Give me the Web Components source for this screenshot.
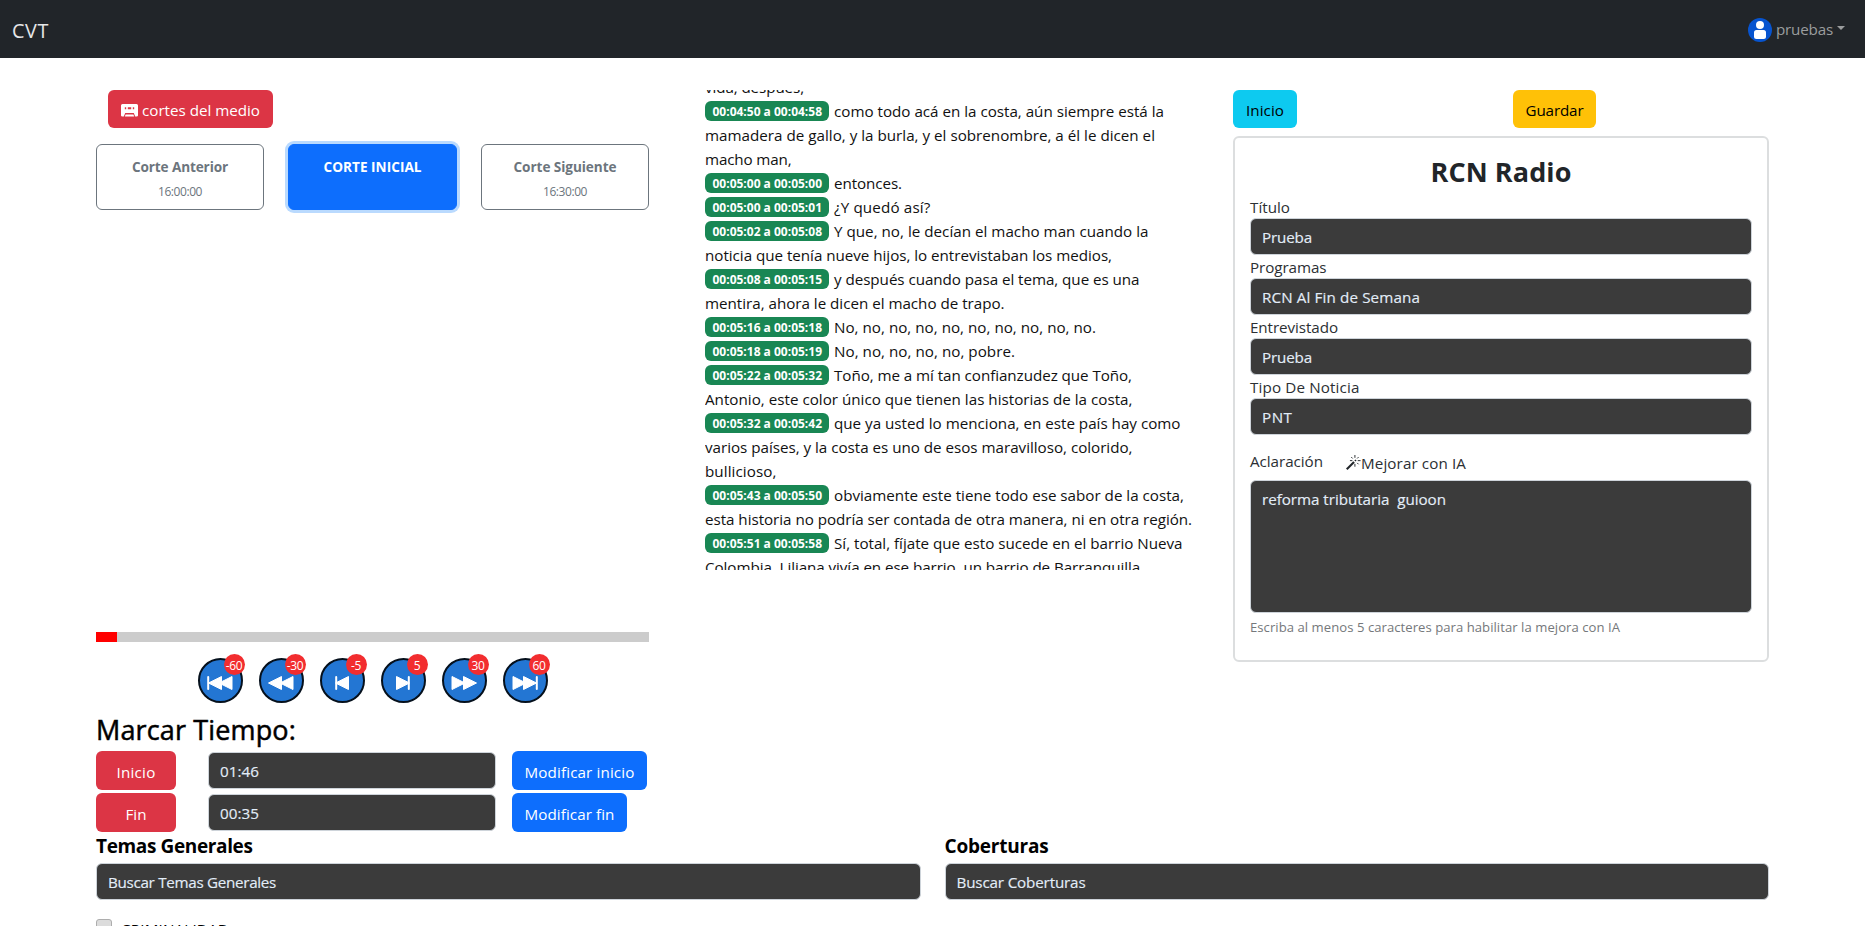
<!DOCTYPE html>
<html lang="es">
<head>
<meta charset="utf-8">
<title>CVT</title>
<style>
html,body{margin:0;height:926px;overflow:hidden;background:#fff}
body{font:15.2px/24px "Open Sans","Noto Sans",sans-serif;color:#000}
</style>
</head>
<body>
<cvt-app></cvt-app>
<script>
const define=(name,html,after)=>{
  const t=document.createElement('template');t.innerHTML=html;
  customElements.define(name,class extends HTMLElement{
    connectedCallback(){
      if(this.shadowRoot)return;
      this.attachShadow({mode:'open'}).append(t.content.cloneNode(true));
      if(after)after(this,this.shadowRoot);
    }
  });
};

/* one line of text tracked to a given width */
define('fit-text',`<style>:host{display:inline-block;white-space:pre;vertical-align:baseline}</style><span><slot></slot></span>`,(h,r)=>{
  const w=+h.getAttribute('w');
  const s=r.querySelector('span');
  const n=h.textContent.length;
  if(w){const nat=s.getBoundingClientRect().width;h.style.letterSpacing=((w-nat)/n).toFixed(4)+'px';h.style.width=w+'px';}
});

/* button: variant colours through custom properties */
define('cvt-button',`<style>
:host{display:inline-flex;box-sizing:border-box;height:38px;align-items:center;justify-content:center;border-radius:6px;background:var(--bg);color:var(--fg,#fff);padding-top:2px}
:host([kind=danger]){--bg:#dc3545}:host([kind=primary]){--bg:#0d6efd}
:host([kind=info]){--bg:#0dcaf0;--fg:#000}:host([kind=warning]){--bg:#ffc107;--fg:#000}
</style><slot></slot>`);

define('cvt-field',`<style>
:host{display:block;box-sizing:border-box;height:37px;border:1px solid #ced4da;border-radius:6px;background:#3b3b3b;color:#e3edf8;padding:6px 0 0 11px;-webkit-text-stroke:.15px #e3edf8}
:host([area]){height:133px;padding-top:6px}
</style><slot></slot>`);

define('cvt-cut',`<style>
:host{display:flex;flex-direction:column;align-items:center;box-sizing:border-box;height:66px;border:1px solid #6c757d;border-radius:6px;color:#6c757d;padding-top:10px}
:host([active]){background:#0d6efd;border-color:#0d6efd;color:#fff;box-shadow:0 0 0 3px #badafe}
.t{font-size:13.6px;font-weight:700;line-height:24px}
.s{font-size:12px;line-height:25px}
</style><div class="t"><slot></slot></div><div class="s"><slot name="time"></slot></div>`);

const L='<path d="M13 -6.5V6.5L0 0Z" stroke-linejoin="round" stroke-width="1"/>',
 R='<path d="M0 -6.5V6.5L13 0Z" stroke-linejoin="round" stroke-width="1"/>',
 B='<path d="M0 -6V6" stroke-width="2" stroke-linecap="round"/>';
const g=(x,s)=>`<g transform="translate(${x} 7)">${s}</g>`;
const shapes={
 '-60':g(1.2,B)+g(1.5,L)+g(12,L),
 '-30':g(.5,L)+g(12,L),
 '-5':g(7.2,B)+g(6.5,L),
 '5':g(6.5,R)+g(18.8,B),
 '30':g(1,R)+g(12.5,R),
 '60':g(1,R)+g(11.5,R)+g(24.8,B)
};
define('cvt-skip',`<style>
:host{display:flex;position:relative;box-sizing:border-box;width:45px;height:45px;border-radius:50%;border:2px solid #05101c;background:#2376d3;justify-content:center;padding-top:16px}
svg{width:26px;height:14px;fill:#fff;stroke:#fff;overflow:visible}
b{position:absolute;left:24px;top:-6px;width:21px;height:21px;border-radius:50%;background:#f22d2f;color:#fff;font:400 12px/23px "Open Sans";text-align:center;display:flex;justify-content:center;letter-spacing:-.3px}
</style><svg viewBox="0 0 26 14"></svg><b></b>`,(h,r)=>{
  const s=h.getAttribute('sec');r.querySelector('svg').innerHTML=shapes[s];r.querySelector('b').textContent=s;
});

define('cvt-navbar',`<style>
:host{display:flex;box-sizing:border-box;height:58px;background:#212529;align-items:center;justify-content:space-between;padding:2px 20px 0 12px}
.brand{font-size:19.8px;color:#e6e7e8;line-height:30px;padding-top:1px}
.user{display:flex;align-items:center;color:#9b9d9e}
.user svg{margin-right:4px}
.user fit-text{margin-top:-2px}
i{border:4.5px solid transparent;border-top-color:#9b9d9e;border-bottom:0;margin:-5px 0 0 4px}
</style>
<div class="brand"><fit-text w="37">CVT</fit-text></div>
<div class="user"><svg width="24" height="24" viewBox="0 0 24 24"><circle cx="12" cy="12" r="12" fill="#0754cf"/><circle cx="12" cy="7" r="4" fill="#fff"/><rect x="6" y="12" width="12" height="9" rx="2.5" fill="#fff"/></svg><fit-text w="57">pruebas</fit-text><i></i></div>`);

define('cvt-player',`<style>
:host{display:flex;flex-direction:column}
.top{margin-left:12px;width:165px;gap:4px}
.top svg{margin-top:0}
.cuts{display:grid;grid-template-columns:168px 169px 168px;justify-content:space-between;margin-top:16px}
.bar{height:10px;background:#ccc;margin-top:422px}
.bar div{height:10px;width:21px;background:red}
.skips{display:flex;gap:16px;padding-left:101.500px;margin-top:16px}
h2{font-size:27px;font-weight:500;line-height:34px;margin:10px 0 4px;-webkit-text-stroke:.5px #000}
.row{display:grid;grid-template-columns:80px 288px max-content;column-gap:32px;align-items:center;margin-bottom:3px}
.row cvt-button{height:39px}
.row cvt-button:last-child{margin-left:-16px}
.a{width:135px}.b{width:115px}
</style>
<cvt-button class="top" kind="danger"><svg width="17" height="13" viewBox="0 0 17 13"><path fill="#fff" fill-rule="evenodd" d="M1.500 0h14Q17 0 17 1.500v10Q17 12.500 15.500 12.500H14.200L12.800 9H4.200L2.800 12.500H1.500Q0 12.500 0 11.500v-10Q0 0 1.500 0ZM3.800 3.200v2h1.400v-2ZM6.800 3.200v2h3.400v-2ZM11.800 3.200v2h1.400v-2ZM4.600 10.500h7.800l.8 2H3.800Z"/></svg><fit-text w="118">cortes del medio</fit-text></cvt-button>
<div class="cuts">
<cvt-cut><fit-text w="96">Corte Anterior</fit-text><fit-text slot="time" w="44">16:00:00</fit-text></cvt-cut>
<cvt-cut active><fit-text w="98">CORTE INICIAL</fit-text></cvt-cut>
<cvt-cut><fit-text w="103">Corte Siguiente</fit-text><fit-text slot="time" w="44">16:30:00</fit-text></cvt-cut>
</div>
<div class="bar"><div></div></div>
<div class="skips"><cvt-skip sec="-60"></cvt-skip><cvt-skip sec="-30"></cvt-skip><cvt-skip sec="-5"></cvt-skip><cvt-skip sec="5"></cvt-skip><cvt-skip sec="30"></cvt-skip><cvt-skip sec="60"></cvt-skip></div>
<h2><fit-text w="200">Marcar Tiempo:</fit-text></h2>
<div class="row"><cvt-button kind="danger"><fit-text w="39">Inicio</fit-text></cvt-button><cvt-field><fit-text w="39">01:46</fit-text></cvt-field><cvt-button class="a" kind="primary"><fit-text w="110">Modificar inicio</fit-text></cvt-button></div>
<div class="row"><cvt-button kind="danger"><fit-text w="21">Fin</fit-text></cvt-button><cvt-field><fit-text w="39">00:35</fit-text></cvt-field><cvt-button class="b" kind="primary"><fit-text w="90">Modificar fin</fit-text></cvt-button></div>`);

const lines=[
 [0,'vida, después,',99],
 ['00:04:50 a 00:04:58','como todo acá en la costa, aún siempre está la',330],
 [0,'mamadera de gallo, y la burla, y el sobrenombre, a él le dicen el',450],
 [0,'macho man,',86.5],
 ['00:05:00 a 00:05:00','entonces.',68],
 ['00:05:00 a 00:05:01','¿Y quedó así?',96.5],
 ['00:05:02 a 00:05:08','Y que, no, le decían el macho man cuando la',314.5],
 [0,'noticia que tenía nueve hijos, lo entrevistaban los medios,',407],
 ['00:05:08 a 00:05:15','y después cuando pasa el tema, que es una',305.5],
 [0,'mentira, ahora le dicen el macho de trapo.',299.5],
 ['00:05:16 a 00:05:18','No, no, no, no, no, no, no, no, no, no.',262],
 ['00:05:18 a 00:05:19','No, no, no, no, no, pobre.',181],
 ['00:05:22 a 00:05:32','Toño, me a mí tan confianzudez que Toño,',298],
 [0,'Antonio, este color único que tienen las historias de la costa,',427.5],
 ['00:05:32 a 00:05:42','que ya usted lo menciona, en este país hay como',346.5],
 [0,'varios países, y la costa es uno de esos maravilloso, colorido,',427.5],
 [0,'bullicioso,',71.5],
 ['00:05:43 a 00:05:50','obviamente este tiene todo ese sabor de la costa,',350],
 [0,'esta historia no podría ser contada de otra manera, ni en otra región.',487],
 ['00:05:51 a 00:05:58','Sí, total, fíjate que esto sucede en el barrio Nueva',348.5],
 [0,'Colombia, Liliana vivía en ese barrio, un barrio de Barranquilla,',439]
];
define('cvt-transcript',`<style>
:host{display:block;height:480px;overflow:hidden}
.in{margin-top:-15px}
.l{height:24px;display:flex;align-items:flex-start;color:#111}
.bd{box-sizing:border-box;width:124px;height:20px;margin:2px 5px 0 0;background:#198754;color:#fff;border-radius:6px;font-size:12px;font-weight:700;line-height:22px;padding-left:7.5px}
</style><div class="in"></div>`,(h,r)=>{
  r.querySelector('.in').innerHTML=lines.map(([b,t,w])=>`<div class="l">${b?`<span class="bd"><fit-text w="109.500">${b}</fit-text></span>`:''}<fit-text w="${w}">${t}</fit-text></div>`).join('');
});

define('cvt-form',`<style>
:host{display:block}
.acts{display:grid;grid-template-columns:280px auto;justify-items:start}
.i{width:64px}.g{width:83px}
.card{box-sizing:border-box;height:526px;border:2px solid #dcdedf;border-radius:6px;margin-top:8px;padding:14px 15px 0;color:#2b2f33}
h2{font-size:27px;line-height:36px;margin:2px 0 5px;text-align:center;color:#212529;font-weight:700}
label{display:block;height:23px;line-height:24px}
.f{height:60px}
.ac{display:flex;height:27px;padding-top:14px;margin-bottom:4px}
.ac .m{display:flex;margin:2px 0 0 23px;gap:0}
.m svg{margin-top:4px}
.help{font-size:13.1px;color:#75787b;margin-top:3px;line-height:22px}
</style>
<div class="acts"><cvt-button class="i" kind="info"><fit-text w="38">Inicio</fit-text></cvt-button><cvt-button class="g" kind="warning"><fit-text w="58">Guardar</fit-text></cvt-button></div>
<div class="card">
<h2><fit-text w="141">RCN Radio</fit-text></h2>
<div class="f"><label><fit-text w="40">Título</fit-text></label><cvt-field><fit-text w="50">Prueba</fit-text></cvt-field></div>
<div class="f"><label><fit-text w="76.500">Programas</fit-text></label><cvt-field><fit-text w="158">RCN Al Fin de Semana</fit-text></cvt-field></div>
<div class="f"><label><fit-text w="88">Entrevistado</fit-text></label><cvt-field><fit-text w="50">Prueba</fit-text></cvt-field></div>
<div class="f"><label><fit-text w="109.500">Tipo De Noticia</fit-text></label><cvt-field><fit-text w="30.500">PNT</fit-text></cvt-field></div>
<div class="ac"><fit-text w="73">Aclaración</fit-text><span class="m"><svg width="15" height="15" viewBox="0 0 16 16" fill="none" stroke="#212529"><path d="M.8 15.200 8.600 7.400" stroke-width="2.200"/><path d="M9.500 6.500l1.200-1.200" stroke-width="1.600"/><path d="M9.500 0v3M9.500 9.500v3M4.200 6h2.600M12.500 6h3M5.600 2.200l1.500 1.500M13.400 2.200l-1.500 1.500M13.400 9.900l-1.500-1.500" stroke-width="1"/></svg><fit-text w="105">Mejorar con IA</fit-text></span></div>
<cvt-field area><fit-text w="184">reforma tributaria  guioon</fit-text></cvt-field>
<div class="help"><fit-text w="370">Escriba al menos 5 caracteres para habilitar la mejora con IA</fit-text></div>
</div>`);

define('cvt-topics',`<style>
:host{display:grid;grid-template-columns:1fr 1fr;gap:24px}
h3{margin:0;font-size:19px;line-height:22px;height:28px;font-weight:700}
label{display:flex;margin-top:19px;gap:9px;height:24px}
i{box-sizing:border-box;width:16px;height:16px;border:1px solid #adadad;border-radius:3px;background:#dcdcdc}
label fit-text{margin-top:-2px}
</style>
<div><h3><fit-text w="156.500">Temas Generales</fit-text></h3><cvt-field><fit-text w="168">Buscar Temas Generales</fit-text></cvt-field>
<label><i></i><fit-text w="108">CRIMINALIDAD</fit-text></label></div>
<div><h3><fit-text w="104">Coberturas</fit-text></h3><cvt-field><fit-text w="129">Buscar Coberturas</fit-text></cvt-field></div>`);

define('cvt-app',`<style>
:host{display:block;height:926px;overflow:hidden}
main{padding:32px 96px 0}
.cols{display:grid;grid-template-columns:553px 488px 536px;justify-content:space-between;height:745px}
.cols cvt-transcript{margin-left:8px;margin-right:-8px}
</style>
<cvt-navbar></cvt-navbar>
<main><div class="cols"><cvt-player></cvt-player><cvt-transcript></cvt-transcript><cvt-form></cvt-form></div><cvt-topics></cvt-topics></main>`);
</script>
</body>
</html>
